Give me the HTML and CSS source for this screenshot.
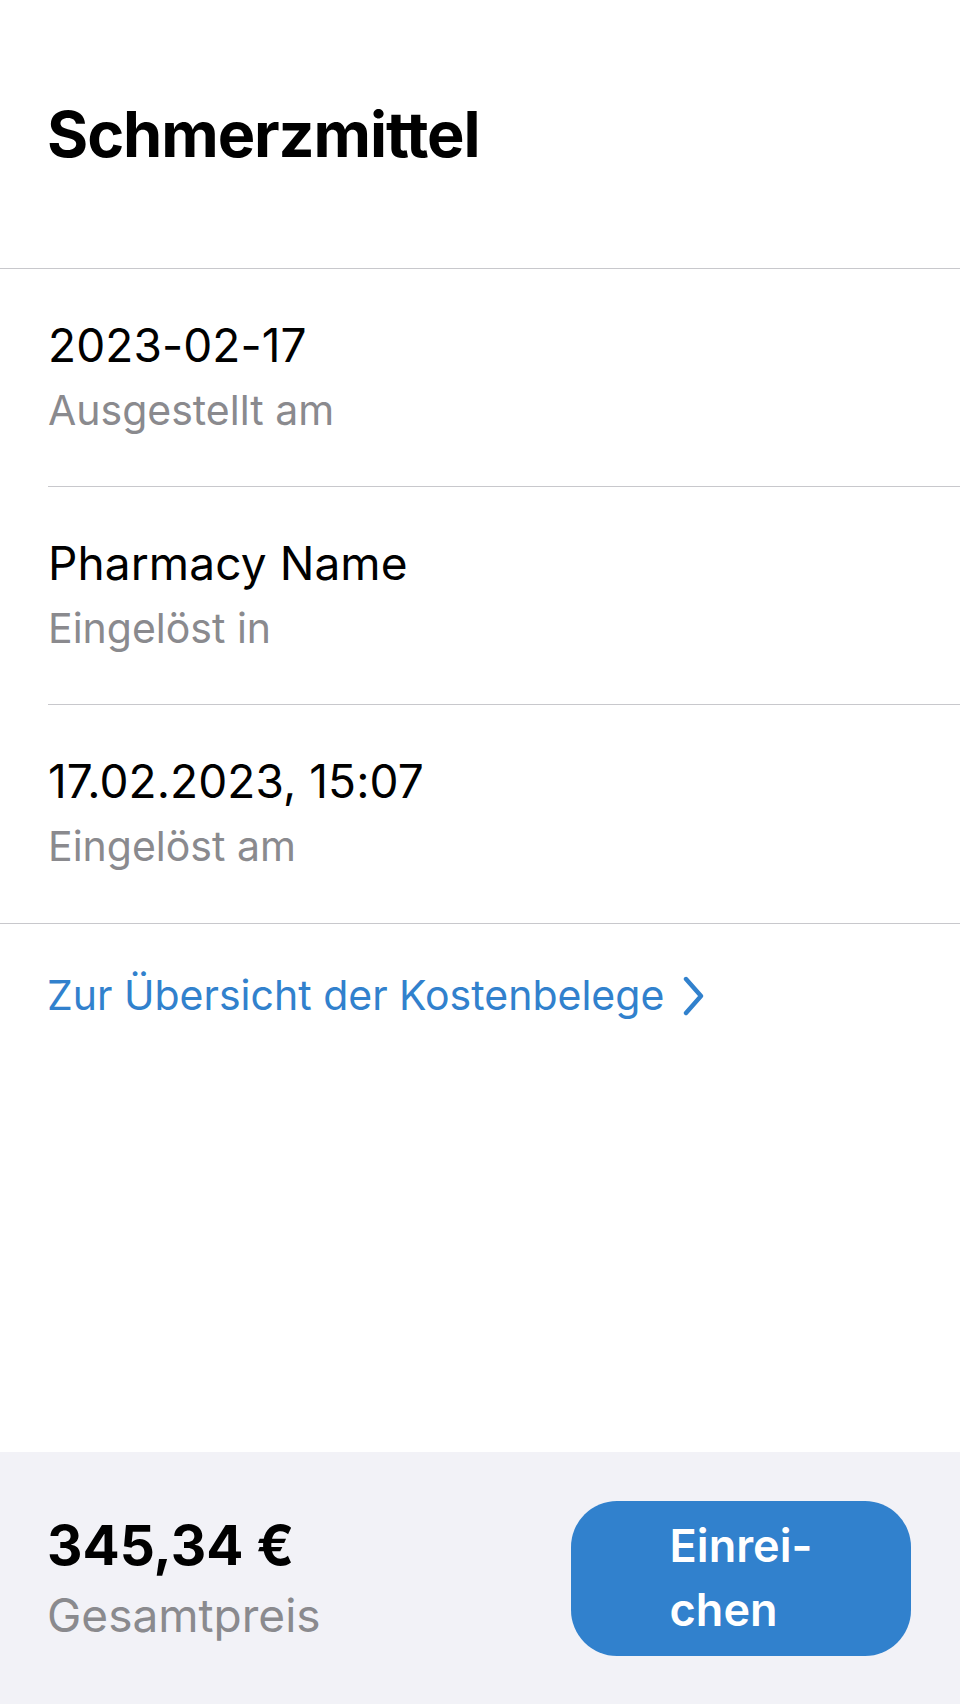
FILE: index.html
```html
<!DOCTYPE html>
<html lang="de">
<head>
<meta charset="utf-8">
<title>Schmerzmittel</title>
<link rel="stylesheet" href="styles.css">
</head>
<body>
<div class="screen">
  <main class="content">
    <header class="header">
      <h1 class="title">Schmerzmittel</h1>
    </header>
    <section class="details">
      <div class="row">
        <div class="value">2023-02-17</div>
        <div class="label">Ausgestellt am</div>
      </div>
      <div class="row">
        <div class="value">Pharmacy Name</div>
        <div class="label">Eingelöst in</div>
      </div>
      <div class="row row-last">
        <div class="value">17.02.2023, 15:07</div>
        <div class="label">Eingelöst am</div>
      </div>
    </section>
    <a class="link" href="#">
      <span>Zur Übersicht der Kostenbelege</span>
      <svg class="chevron" width="24" height="40" viewBox="0 0 24 40" aria-hidden="true">
        <path d="M4 3 L19 20 L4 37" fill="none" stroke="currentColor" stroke-width="4.4" stroke-linecap="round" stroke-linejoin="round"/>
      </svg>
    </a>
  </main>
  <footer class="bar">
    <div class="total">
      <div class="price">345,34 €</div>
      <div class="price-label">Gesamtpreis</div>
    </div>
    <button class="submit" type="button"><span class="submit-text">Einrei-<br>chen</span></button>
  </footer>
</div>
</body>
</html>
```
FILE: styles.css
```css
* { box-sizing: border-box; }
html, body { margin: 0; padding: 0; }
body {
  background: #ffffff;
  font-family: Inter, "Liberation Sans", sans-serif;
  color: #000;
}
.screen {
  width: 960px;
  height: 1704px;
  display: flex;
  flex-direction: column;
}
.content {
  flex: 1;
  display: flex;
  flex-direction: column;
}
.header {
  height: 269px;
  padding: 96px 0 0 47px;
  border-bottom: 1px solid #c8c8cc;
}
.title {
  margin: 0;
  font-size: 63px;
  line-height: 76px;
  font-weight: 700;
  letter-spacing: -1.1px;
}
.details {
  padding-left: 48px;
  border-bottom: 1px solid #c8c8cc;
}
.row {
  height: 218px;
  padding: 48px 0 0 0;
  border-bottom: 1px solid #c8c8cc;
}
.row-last { border-bottom: none; }
.value {
  font-size: 46px;
  line-height: 56px;
  letter-spacing: 0.1px;
}
.label {
  margin-top: 11px;
  font-size: 41px;
  line-height: 52px;
  color: #8a8a8e;
}
.link {
  margin: 45px 0 0 47px;
  display: flex;
  align-items: center;
  gap: 18px;
  font-size: 41px;
  line-height: 52px;
  color: #3181cd;
  text-decoration: none;
}
.chevron { display: block; margin-top: 2px; }
.bar {
  height: 252px;
  background: #f2f2f7;
  padding: 0 49px 0 47px;
  display: flex;
  align-items: center;
  justify-content: space-between;
}
.total {
  display: flex;
  flex-direction: column;
  gap: 10px;
}
.price {
  font-size: 55px;
  line-height: 64px;
  font-weight: 700;
}
.price-label {
  font-size: 46px;
  line-height: 56px;
  color: #8a8a8e;
}
.submit {
  width: 340px;
  height: 155px;
  border: none;
  border-radius: 46px;
  background: #3181cd;
  color: #fff;
  font-family: inherit;
  font-size: 45px;
  line-height: 64px;
  font-weight: 600;
  display: flex;
  align-items: center;
  justify-content: center;
  padding: 0;
}
.submit-text {
  display: inline-block;
  text-align: left;
}
```
